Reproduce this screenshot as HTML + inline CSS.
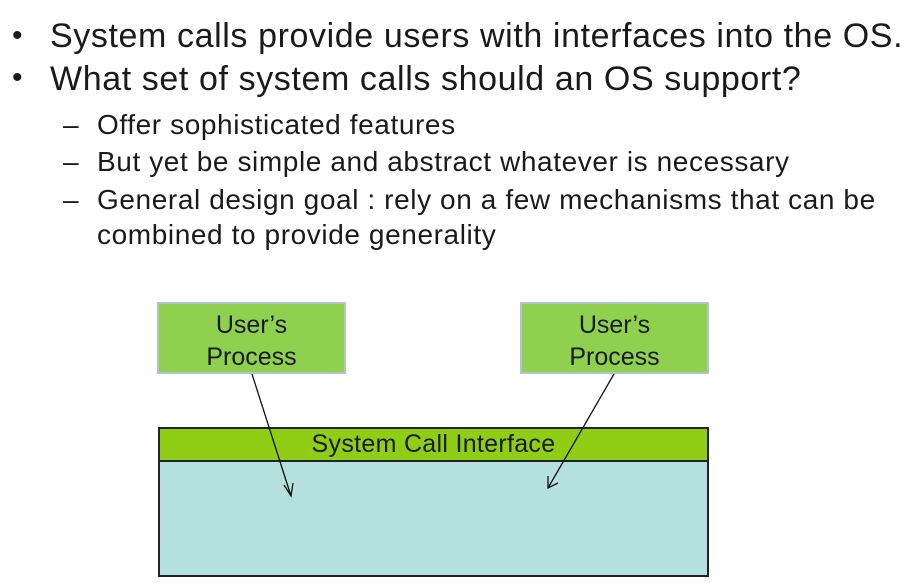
<!DOCTYPE html>
<html><head><meta charset="utf-8"><style>
body{margin:0;width:918px;height:583px;background:#fff;position:relative;overflow:hidden;font-family:"Liberation Sans",Arial,sans-serif;color:#1a1a1a}
.t{position:absolute;white-space:nowrap;line-height:1}
.b{font-size:34px;letter-spacing:0.6px}
.s{font-size:28px;letter-spacing:0.6px}
.box{position:absolute;background:#8fd14f;border:2px solid #b0c4cc;box-sizing:border-box;text-align:center;font-size:25px;line-height:32px;padding-top:5px}
</style></head><body>
<div class="t b" style="left:12px;top:21px;font-size:30px">•</div>
<div class="t b" style="left:50px;top:19px">System calls provide users with interfaces into the OS.</div>
<div class="t b" style="left:12px;top:63px;font-size:30px">•</div>
<div class="t b" style="left:50px;top:62px">What set of system calls should an OS support?</div>
<div class="t s" style="left:63px;top:111px">–</div>
<div class="t s" style="left:97px;top:111px">Offer sophisticated features</div>
<div class="t s" style="left:63px;top:148px">–</div>
<div class="t s" style="left:97px;top:148px">But yet be simple and abstract whatever is necessary</div>
<div class="t s" style="left:63px;top:186px">–</div>
<div class="t s" style="left:97px;top:186px">General design goal : rely on a few mechanisms that can be</div>
<div class="t s" style="left:97px;top:221px">combined to provide generality</div>

<div class="box" style="left:157px;top:302px;width:189px;height:72px">User’s<br>Process</div>
<div class="box" style="left:520px;top:302px;width:189px;height:72px">User’s<br>Process</div>

<div style="position:absolute;left:158px;top:427px;width:551px;height:150px;background:#b4e0e0;border:2px solid #222;box-sizing:border-box"></div>
<div style="position:absolute;left:158px;top:427px;width:551px;height:35px;background:#8fce14;border:2px solid #222;box-sizing:border-box;text-align:center;font-size:25px;line-height:31px;letter-spacing:0.3px">System Call Interface</div>

<svg style="position:absolute;left:0;top:0" width="918" height="583">
<g stroke="#111" stroke-width="1.3" fill="none">
<line x1="252" y1="374" x2="291" y2="496"/>
<polyline points="284,485 291,496 293,483"/>
<line x1="614" y1="374" x2="548" y2="488"/>
<polyline points="548,476 548,488 558,483"/>
</g>
</svg>
</body></html>
